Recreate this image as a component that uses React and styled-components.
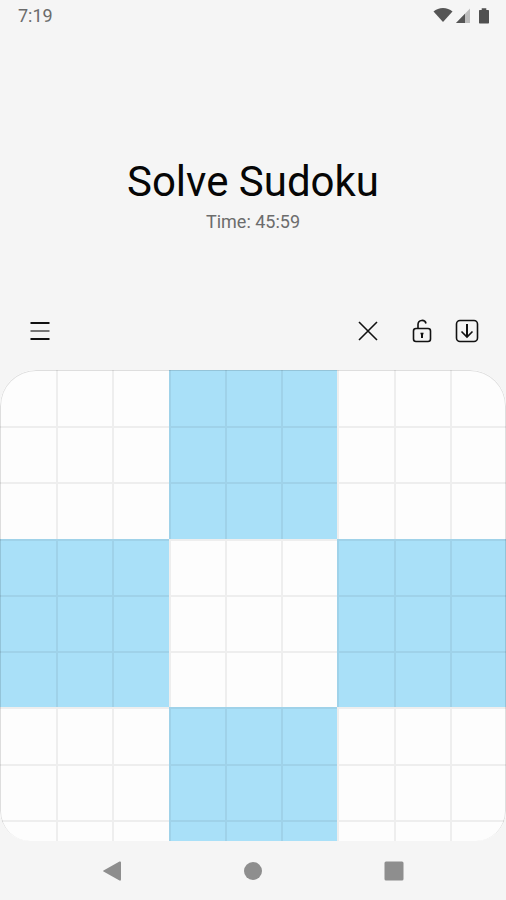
import React from "react";
import styled, { createGlobalStyle } from "styled-components";

const GlobalStyle = createGlobalStyle`
  * { box-sizing: border-box; }
  body {
    margin: 0;
    background: #f5f5f5;
    font-family: Roboto, "Liberation Sans", sans-serif;
  }
`;

const Screen = styled.div`
  display: flex;
  flex-direction: column;
  height: 100vh;
  background: #f5f5f5;
`;

const StatusBar = styled.header`
  display: flex;
  justify-content: space-between;
  align-items: center;
  height: 32px;
  padding: 0 14px 0 18px;
  color: #6b6b6b;
  font-size: 18px;
  line-height: 20px;
`;

const StatusIcons = styled.svg`
  display: block;
  width: 60px;
  height: 20px;
`;

const Heading = styled.section`
  display: flex;
  flex-direction: column;
  align-items: center;
  padding: 124px 16px 77px;
`;

const Title = styled.h1`
  margin: 0;
  color: #060606;
  font-size: 42px;
  font-weight: 400;
  line-height: 52px;
`;

const Timer = styled.p`
  margin: 2px 0 0;
  color: #6c6c6c;
  font-size: 18px;
  line-height: 24px;
`;

const Toolbar = styled.div`
  display: flex;
  justify-content: space-between;
  align-items: center;
  height: 40px;
  margin-bottom: 19px;
  padding: 0 23px 0 24px;
`;

const Actions = styled.div`
  display: flex;
  gap: 13px;
`;

const IconButton = styled.button`
  display: flex;
  align-items: center;
  justify-content: center;
  width: 32px;
  height: 32px;
  margin-right: ${(p) => (p.$spaced ? "9px" : "0")};
  padding: 0;
  border: 0;
  background: none;
  color: #111;
  cursor: pointer;
`;

const Icon = styled.svg`
  display: block;
  flex: none;
  width: 24px;
  height: 24px;
  fill: none;
  stroke: currentColor;
  stroke-width: 1.6;
`;

const BoardFrame = styled.main`
  position: relative;
  flex: 1;
  min-height: 0;
  overflow: hidden;
  border-radius: 36px 36px 30px 30px;
  background: #fdfdfd;

  &::after {
    content: "";
    position: absolute;
    inset: 0;
    border: 1px solid rgba(0, 0, 0, 0.12);
    border-bottom: 0;
    border-radius: inherit;
    pointer-events: none;
  }
`;

const Board = styled.div`
  display: grid;
  grid-template-columns: repeat(9, 1fr);
`;

const Cell = styled.button`
  aspect-ratio: 1;
  min-width: 0;
  padding: 0;
  border: 0 solid rgba(0, 0, 0, 0.06);
  border-width: ${(p) => (p.$firstRow ? "0" : "2px")} 0 0 ${(p) => (p.$firstCol ? "0" : "2px")};
  background: ${(p) => (p.$shaded ? "#a9e0f8" : "#fdfdfd")};
`;

const NavBar = styled.nav`
  display: grid;
  grid-template-columns: repeat(3, 1fr);
  justify-items: center;
  align-items: center;
  height: 59px;
  padding: 0 42px;
`;

const NavButton = styled(IconButton)`
  color: #8e8e8e;
`;

const NavIcon = styled(Icon)`
  fill: currentColor;
  stroke: none;
`;

const cells = Array.from({ length: 81 }, (_, i) => ({
  row: Math.floor(i / 9),
  col: i % 9,
}));

export default function App() {
  return (
    <Screen>
      <GlobalStyle />
      <StatusBar>
        <span>7:19</span>
        <StatusIcons viewBox="0 0 60 20" role="img" aria-label="Wi-Fi, signal and battery">
          <path d="M1.500 5.500C6.500 .8 15.500 .8 20.500 5.500L11 16Z" fill="#555" />
          <path d="M38 2.500V17H24Z" fill="#bdbdbd" />
          <path d="M33 7.700V17H24Z" fill="#555" />
          <path d="M47.700 4h2V2.200h4.600V4h2q.7 0 .7.7v12q0 .7-.7.700h-8.600q-.7 0-.7-.7V4.700q0-.7.7-.7Z" fill="#505050" />
        </StatusIcons>
      </StatusBar>

      <Heading>
        <Title>Solve Sudoku</Title>
        <Timer>Time: 45:59</Timer>
      </Heading>

      <Toolbar>
        <IconButton aria-label="Menu">
          <Icon viewBox="0 0 24 24">
            <path d="M2.500 4h19M2.500 20h19" strokeWidth="2" />
            <path d="M2.500 12h19" stroke="#777" strokeWidth="2" />
          </Icon>
        </IconButton>
        <Actions>
          <IconButton aria-label="Clear" $spaced>
            <Icon viewBox="0 0 24 24">
              <path d="M3 3l18 18M21 3L3 21" />
            </Icon>
          </IconButton>
          <IconButton aria-label="Unlock">
            <Icon viewBox="0 0 24 24">
              <rect x="3.500" y="9.500" width="17" height="13" rx="2.500" />
              <path d="M8 9.500V5.500C8 .4 15 .1 16 4.500" />
              <path d="M12 14v5" strokeWidth="2" />
              <path d="M10.500 14.500h3" />
            </Icon>
          </IconButton>
          <IconButton aria-label="Download">
            <Icon viewBox="0 0 24 24">
              <rect x="1.500" y="1.500" width="21" height="21" rx="3.500" />
              <path d="M12 5v13" strokeWidth="2" />
              <path d="M6.500 12.500L12 18l5.500-5.500" />
            </Icon>
          </IconButton>
        </Actions>
      </Toolbar>

      <BoardFrame>
        <Board>
          {cells.map(({ row, col }) => (
            <Cell
              key={`${row}-${col}`}
              aria-label={`Row ${row + 1}, column ${col + 1}`}
              $firstRow={row === 0}
              $firstCol={col === 0}
              $shaded={(Math.floor(row / 3) + Math.floor(col / 3)) % 2 === 1}
            />
          ))}
        </Board>
      </BoardFrame>

      <NavBar>
        <NavButton aria-label="Back">
          <NavIcon viewBox="0 0 24 24"><path d="M3.500 11.500L19.500 2.500Q21 2 21 3.500V20.500Q21 22 19.500 21.500L3.500 12.500Q2.500 12 3.500 11.500Z" /></NavIcon>
        </NavButton>
        <NavButton aria-label="Home">
          <NavIcon viewBox="0 0 24 24"><circle cx="12" cy="12" r="9" /></NavIcon>
        </NavButton>
        <NavButton aria-label="Recent apps">
          <NavIcon viewBox="0 0 24 24"><rect x="2.500" y="2.500" width="19" height="19" rx="1.500" /></NavIcon>
        </NavButton>
      </NavBar>
    </Screen>
  );
}
